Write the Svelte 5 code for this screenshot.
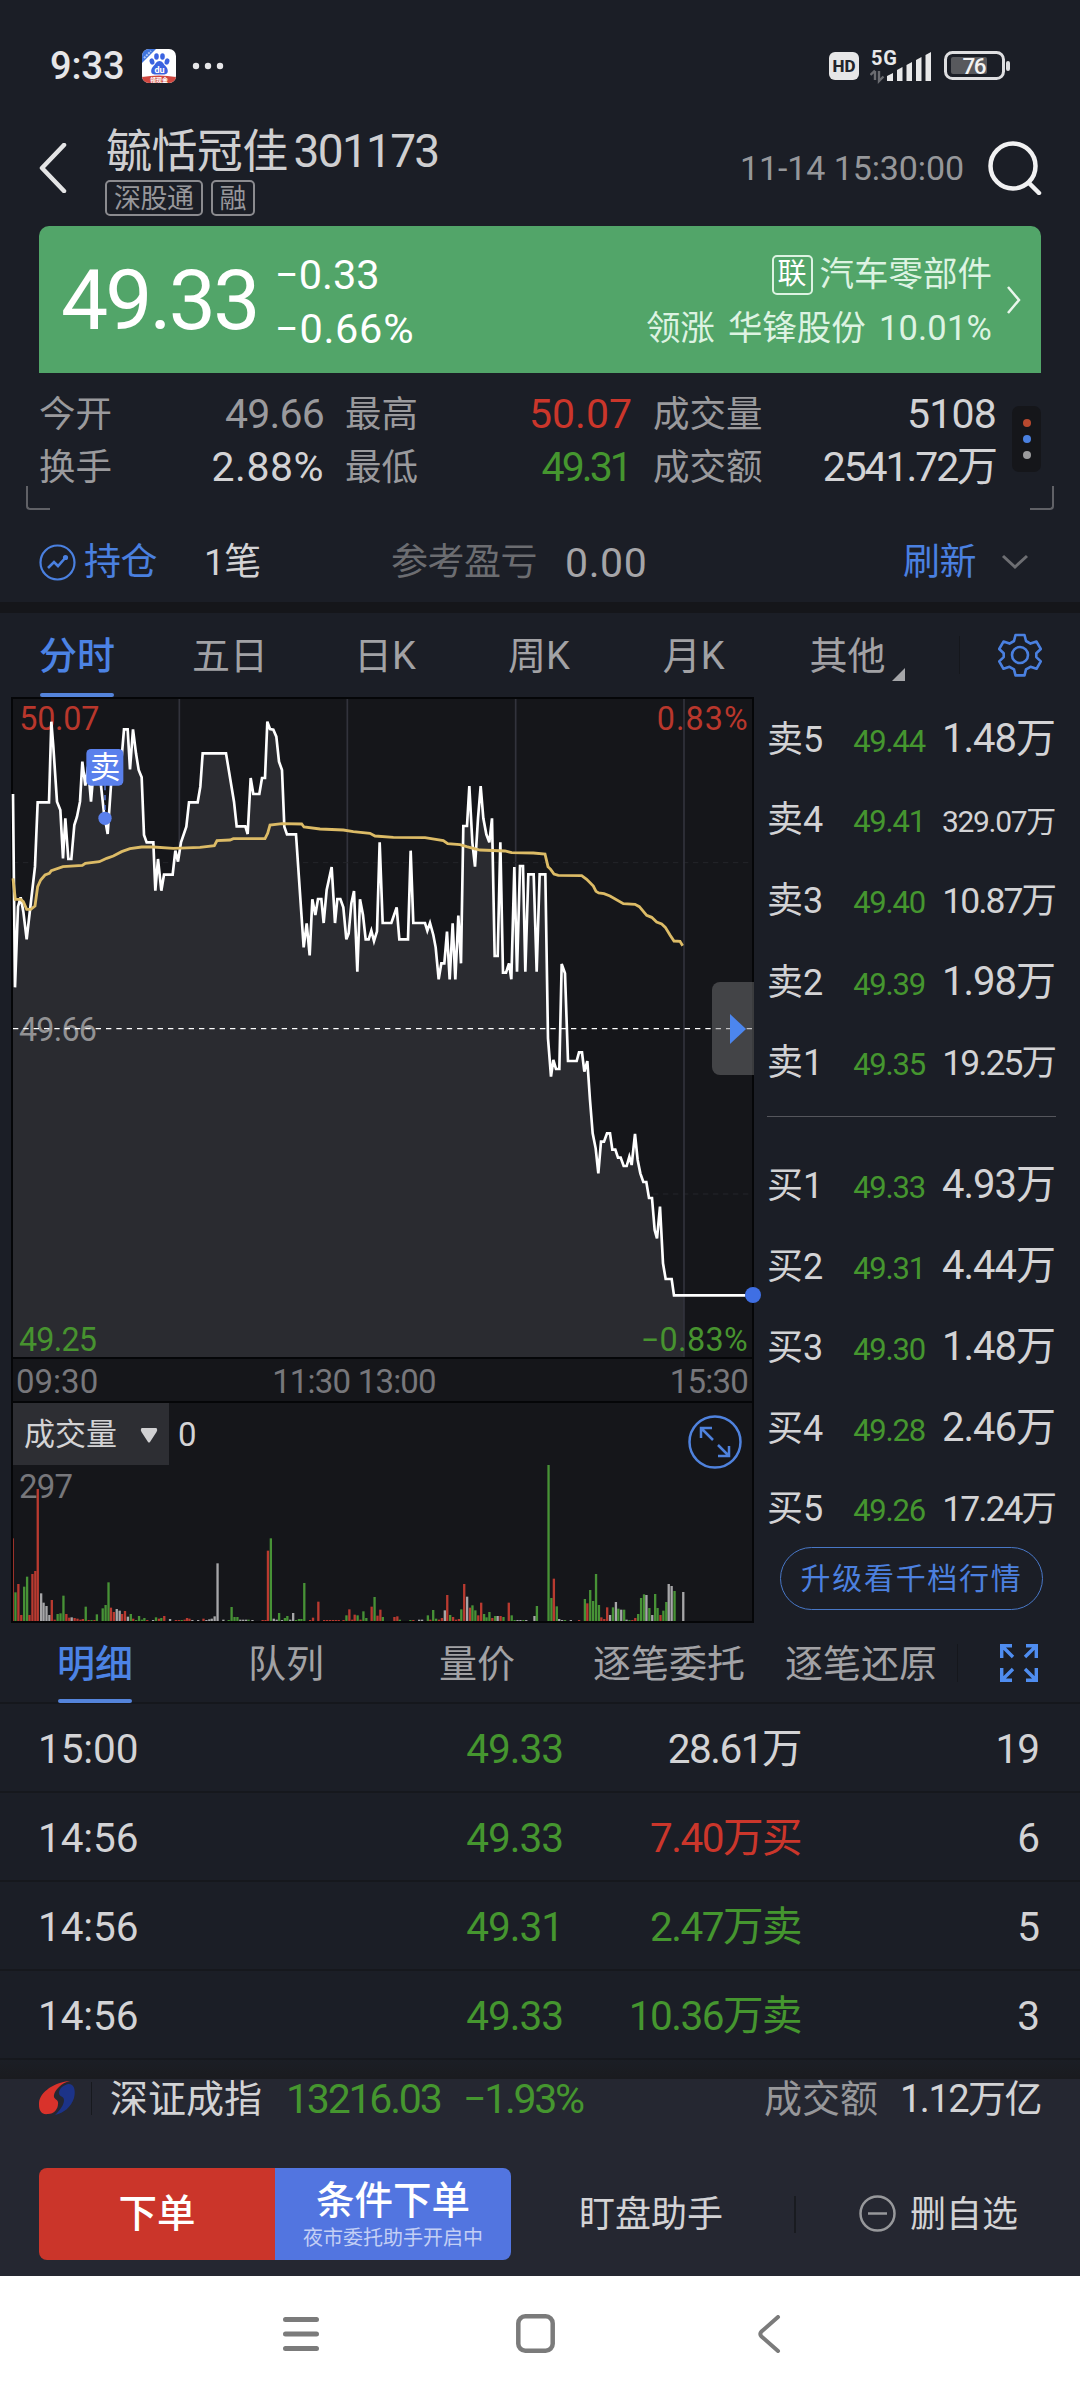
<script>
  // Minute line and average line, in plot units (three per pixel).
  const price =
    '39,312 45,892 54,650 62,622 70,665 80,748 90,660 105,530 113,337 147,337 154,95 160,170 171,335 181,360 189,505 196,385 205,507 214,507 223,405 231,380 240,335 247,215 256,287 264,230 273,335 281,240 298,240 312,370 323,432 333,285 345,230 357,280 366,190 372,118 383,118 390,238 399,118 408,190 416,240 425,262 432,435 440,457 460,457 466,602 474,507 484,602 492,554 518,554 526,482 534,515 543,457 559,410 567,337 593,337 601,290 608,190 678,190 702,335 710,409 736,409 743,432 752,264 760,312 778,312 786,264 795,264 802,95 810,117 820,119 829,140 837,215 846,240 853,410 861,433 888,433 911,772 920,700 929,796 937,628 946,675 954,627 964,627 971,699 980,600 995,531 1005,699 1012,627 1021,627 1030,652 1039,748 1046,730 1054,640 1062,603 1072,845 1080,628 1089,675 1097,748 1106,748 1114,722 1122,753 1131,724 1139,457 1148,699 1174,699 1190,652 1198,748 1224,748 1232,482 1240,699 1275,699 1282,722 1290,699 1300,735 1307,772 1316,868 1324,820 1333,820 1341,725 1349,868 1358,700 1366,868 1375,677 1383,820 1390,408 1401,408 1408,288 1417,457 1425,530 1434,385 1442,288 1450,385 1459,433 1468,457 1476,385 1484,798 1493,798 1501,457 1509,848 1518,848 1527,820 1534,868 1543,531 1551,845 1560,528 1569,528 1576,845 1585,553 1601,553 1610,845 1619,553 1636,553 1644,1045 1653,1160 1660,1110 1668,1137 1678,1137 1685,822 1695,850 1704,1113 1730,1113 1737,1087 1746,1087 1753,1145 1762,1113 1770,1230 1778,1330 1787,1375 1795,1450 1803,1355 1812,1355 1821,1330 1830,1330 1837,1379 1846,1379 1854,1403 1862,1403 1871,1428 1880,1428 1888,1400 1895,1425 1905,1332 1913,1410 1921,1450 1930,1476 1939,1476 1947,1524 1956,1524 1964,1620 1971,1645 1980,1550 1989,1720 1997,1767 2015,1767 2022,1816';
  const average =
    '39,565 46,628 62,628 70,635 80,658 92,658 105,648 113,590 122,570 135,555 148,550 154,542 189,530 247,526 256,520 298,515 320,505 340,498 365,485 390,476 425,471 460,471 520,475 600,472 643,467 651,452 690,450 700,446 795,446 803,430 810,405 846,401 905,402 912,411 960,417 1030,420 1060,425 1110,430 1125,438 1180,442 1275,443 1330,452 1343,461 1380,464 1400,470 1440,480 1515,483 1535,488 1600,489 1635,492 1644,530 1652,538 1662,552 1675,556 1745,557 1760,568 1780,588 1788,604 1796,609 1812,611 1830,618 1870,641 1905,643 1918,650 1940,676 1955,682 1970,696 1985,702 1996,712 2010,735 2022,753 2040,754 2048,767';

  // Volume bars: x, top, colour key.
  const volume = '28,595,r 31,757,g 37,732,r 43,825,r 49,740,g 55,710,g 60,825,r 66,702,r 72,693,r 77,447,r 84,760,w 89,788,w 95,798,w 101,825,w 106,780,r 112,839,r 118,822,g 124,820,g 130,767,g 136,822,r 142,833,r 147,832,w 153,834,r 159,836,r 165,839,r 170,837,r 176,800,g 182,840,r 188,840,g 194,840,r 199,823,g 211,805,g 217,795,g 223,727,g 228,803,r 234,816,r 240,807,w 246,812,w 251,822,r 257,813,r 263,830,w 269,822,g 274,836,r 280,840,g 286,828,g 292,839,g 297,834,g 303,840,r 315,840,w 321,832,g 327,836,r 332,834,g 338,828,r 350,837,w 362,840,r 368,840,r 374,840,g 380,839,r 385,834,r 390,836,r 396,840,w 408,840,w 419,836,r 425,840,w 431,838,w 436,836,w 442,829,w 448,670,w 460,839,w 471,840,g 477,801,g 483,831,g 489,831,g 495,839,w 501,839,w 507,839,w 512,839,g 520,840,w 541,840,r 547,840,r 552,632,r 558,595,g 564,836,w 570,839,w 575,819,g 581,840,w 587,834,g 592,828,g 598,839,w 604,819,w 610,840,g 616,837,g 621,837,g 627,729,g 639,840,r 645,833,r 656,785,r 668,840,r 674,840,r 680,840,r 686,840,r 692,840,r 698,840,r 708,840,r 714,826,g 720,808,r 726,839,r 731,824,r 737,826,g 743,839,r 749,814,g 755,834,g 766,800,r 772,771,g 778,827,r 784,809,r 789,831,g 813,831,r 819,829,r 824,839,g 846,840,g 852,840,r 864,839,w 870,839,w 882,826,g 887,839,r 893,810,g 899,836,g 905,839,r 911,834,r 917,811,w 922,765,r 928,825,g 934,831,r 940,839,r 946,837,r 951,808,g 957,732,r 963,770,w 969,803,r 974,796,g 980,811,g 986,826,r 992,788,r 998,822,g 1003,832,g 1009,816,g 1015,834,r 1021,828,g 1026,828,w 1032,828,r 1038,831,g 1049,788,r 1055,826,g 1061,840,g 1067,840,w 1073,840,w 1079,840,g 1085,840,w 1102,828,w 1107,798,g 1131,375,g 1137,774,g 1142,716,r 1148,799,g 1153,837,w 1159,840,w 1165,840,g 1177,840,w 1194,840,r 1206,777,g 1211,790,r 1217,750,g 1223,783,g 1229,702,g 1235,795,g 1240,832,r 1246,837,r 1252,802,r 1258,825,w 1264,802,g 1270,786,w 1275,806,g 1281,809,w 1287,809,g 1292,839,w 1298,840,g 1304,840,r 1310,834,r 1316,822,g 1322,774,g 1328,763,g 1333,765,w 1339,804,g 1345,825,w 1351,762,g 1356,804,g 1362,825,r 1368,812,g 1374,786,g 1379,732,w 1385,738,w 1391,753,g 1409,756,w'
    .split(' ')
    .map((b) => b.split(','));

  const sells = [
    ['卖5', '49.44', '1.48万', 'l'],
    ['卖4', '49.41', '329.07万', 's'],
    ['卖3', '49.40', '10.87万', 'm'],
    ['卖2', '49.39', '1.98万', 'l'],
    ['卖1', '49.35', '19.25万', 'm'],
  ];
  const buys = [
    ['买1', '49.33', '4.93万', 'l'],
    ['买2', '49.31', '4.44万', 'l'],
    ['买3', '49.30', '1.48万', 'l'],
    ['买4', '49.28', '2.46万', 'l'],
    ['买5', '49.26', '17.24万', 'm'],
  ];
  const trades = [
    ['15:00', '49.33', '28.61万', '', '19'],
    ['14:56', '49.33', '7.40万买', 'red', '6'],
    ['14:56', '49.31', '2.47万卖', 'green', '5'],
    ['14:56', '49.33', '10.36万卖', 'green', '3'],
  ];
</script>

{#snippet level(row)}
  <div class="level">
    <span class="lv">{row[0]}</span>
    <span class="lp green">{row[1]}</span>
    <span class="lq {row[3]}">{row[2]}</span>
  </div>
{/snippet}

<main>
  <header class="status">
    <span class="clock">9:33</span>
    <svg class="app-icon" width="34" height="34" viewBox="0 0 34 34">
      <clipPath id="ic"><rect width="34" height="34" rx="7" /></clipPath>
      <g clip-path="url(#ic)">
        <rect width="34" height="34" fill="#fff" />
        <path d="M0 0h14L0 14z" fill="#3f74dc" />
        <path d="M2 9 9 2" stroke="#a9c4f7" stroke-width="2" stroke-dasharray="2 1" />
        <g fill="#3b63e0">
          <ellipse cx="10" cy="12.5" rx="2.4" ry="3.2" transform="rotate(-15 10 12.5)" />
          <ellipse cx="14.5" cy="7.5" rx="2.3" ry="3.3" />
          <ellipse cx="20.5" cy="7.5" rx="2.3" ry="3.3" />
          <ellipse cx="25" cy="12.5" rx="2.4" ry="3.2" transform="rotate(15 25 12.5)" />
          <path d="M17.5 12c3 0 4 3 6 5 3 3 3.500 8-1 8.500h-10c-4.500-.5-4-5.500-1-8.500 2-2 3-5 6-5z" />
        </g>
        <text x="17.500" y="23.500" text-anchor="middle" font-size="9" font-weight="700" fill="#fff">du</text>
        <path d="M0 28q17-3 34 0v6H0z" fill="#d0473f" />
        <text x="17" y="33" text-anchor="middle" font-size="6" font-weight="700" fill="#fff">领现金</text>
      </g>
    </svg>
    <svg class="more" width="32" height="8" viewBox="0 0 32 8" fill="#e6e6e8"><circle cx="4" cy="4" r="3.200" /><circle cx="16" cy="4" r="3.200" /><circle cx="28" cy="4" r="3.200" /></svg>
    <span class="hd">HD</span>
    <div class="net">
      <svg width="62" height="40" viewBox="0 -4 62 40" fill="#e8e8e9">
        <text x="1" y="14.500" font-size="20" font-weight="700" textLength="26">5G</text>
        <path d="M5 20v9M0.500 24l4.500-4.500M9 20v10l4.500-4.500" transform="translate(0 1)" stroke="#6a6b70" stroke-width="2.400" fill="none" />
        <path d="M17 31v-5l6-3v8zM27 31V20l5.500-3v14zM36.500 31V15l5.500-3v19zM46 31V10l5.500-3v24zM55.500 31V5l5.500-3v29z" />
      </svg>
    </div>
    <svg class="battery" width="68" height="30" viewBox="0 0 68 30">
      <rect x="1.500" y="1.500" width="58" height="26" rx="7" fill="none" stroke="#dedee0" stroke-width="3" />
      <rect x="7" y="6" width="36" height="17" rx="2" fill="#58595d" />
      <path d="M64 12v6" stroke="#dedee0" stroke-width="4" stroke-linecap="round" />
      <text x="30.500" y="22.500" text-anchor="middle" font-size="22.500" font-weight="500" fill="#f2f2f2" textLength="24">76</text>
    </svg>
  </header>

  <section class="title">
    <svg class="back" width="28" height="50" viewBox="0 0 28 50"><path d="M25 2 3 25l22 23" fill="none" stroke="#e4e4e5" stroke-width="4.500" stroke-linejoin="round" stroke-linecap="round" /></svg>
    <div class="names">
      <div class="name">毓恬冠佳<span>301173</span></div>
      <div class="tags"><span>深股通</span><span>融</span></div>
    </div>
    <time>11-14 15:30:00</time>
    <svg class="search" width="54" height="54" viewBox="0 0 54 54" fill="none" stroke="#f1f1f2" stroke-width="4.500" stroke-linecap="round"><circle cx="25" cy="25" r="22.500" /><path d="m41 42 10 10" /></svg>
  </section>

  <section class="quote">
    <div class="last">49.33</div>
    <div class="chg"><span>−0.33</span><span>−0.66%</span></div>
    <div class="sector">
      <div><i>联</i>汽车零部件</div>
      <div class="lead"><span>领涨</span><span>华锋股份</span><b>10.01%</b></div>
    </div>
    <svg width="16" height="30" viewBox="0 0 16 30"><path d="m2 2 11 13L2 28" fill="none" stroke="#e9f6ec" stroke-width="2.500" /></svg>
  </section>

  <section class="stats">
    <div class="grid">
      <span>今开</span><b class="dim">49.66</b><span>最高</span><b class="red">50.07</b><span>成交量</span><b>5108</b>
      <span>换手</span><b class="wide">2.88%</b><span>最低</span><b class="green tight">49.31</b><span>成交额</span><b class="tight">2541.72万</b>
    </div>
    <div class="dots"><i></i><i></i><i></i></div>
  </section>
  <div class="corners"><i></i><i></i></div>

  <section class="hold">
    <svg width="37" height="37" viewBox="0 0 37 37" fill="none" stroke="#4a80e0" stroke-width="2.200"><circle cx="18.500" cy="18.500" r="17" /><path d="m9 24 6-6 4 4 8-9" stroke-width="2.600" /><circle cx="26.500" cy="13.500" r="1.500" fill="#4a80e0" /></svg>
    <span class="pos">持仓</span><span class="cnt">1笔</span><span class="ref">参考盈亏</span><span class="pl">0.00</span><span class="fresh">刷新</span>
    <svg class="down" width="28" height="16" viewBox="0 0 28 16"><path d="m2 2 12 11L26 2" fill="none" stroke="#6d6e72" stroke-width="3" /></svg>
  </section>
  <div class="band"></div>

  <nav class="tabs">
    <span class="on">分时</span><span>五日</span><span>日K</span><span>周K</span><span>月K</span><span class="other">其他</span>
    <svg class="tri" width="13" height="13"><path d="M13 0v13H0z" fill="#a5a6a9" /></svg>
    <i></i>
    <svg class="gear" width="44" height="44" viewBox="0 0 44 44" fill="none" stroke="#4a80e0" stroke-width="2.600" stroke-linejoin="round">
      <path d="M17.500 2h9l1.500 6 4.500 2.600 6-2 4.300 7.400-4.500 4.300v3.800l4.500 4.300-4.300 7.400-6-2-4.500 2.600-1.500 6h-9l-1.500-6-4.500-2.600-6 2L1.200 28.400l4.500-4.300v-3.800L1.200 16l4.300-7.400 6 2L16 8z" /><circle cx="22" cy="22" r="8" />
    </svg>
  </nav>

  <section class="market">
    <div class="charts">
      <div class="plot">
        <svg class="lines" width="740" height="658" viewBox="39 27 2220 1974">
          <g stroke="#32333c" stroke-width="5"><path d="M538 27v1974M1042 27v1974M1547 27v1974" /></g>
          <path d="M39 518h2220M39 1512h2220" stroke="#24252a" stroke-width="3" stroke-dasharray="16 14" />
          <polygon points="39,2001 {price} 2052,1816 2052,2001" fill="#2a2b30" />
          <path d="M2052 27v1974" stroke="#32333c" stroke-width="5" />
          <g font-size="97">
            <text x="58" y="121" fill="#b9372c" textLength="240">50.07</text>
            <text x="1970" y="121" fill="#b9372c" textLength="273">0.83%</text>
            <text x="57" y="1052" fill="#929294" textLength="234">49.66</text>
            <text x="57" y="1982" fill="#47932f" textLength="234">49.25</text>
            <text x="1922" y="1982" fill="#47932f" textLength="321">−0.83%</text>
          </g>
          <path d="M39 1016h2220" stroke="#fff" stroke-width="4" stroke-dasharray="16 15" />
          <polyline points="{price} 2236,1816" fill="none" stroke="#fff" stroke-width="8" />
          <polyline points={average} fill="none" stroke="#dcbb66" stroke-width="8.500" />
          <path d="M315 285v75" stroke="#5c80ee" stroke-width="4" stroke-dasharray="16 14" />
          <circle cx="315" cy="385" r="20" fill="#5a80ec" />
          <rect x="259" y="177" width="111" height="110" rx="14" fill="#5a80ec" />
          <text x="315" y="265" font-size="92" text-anchor="middle" fill="#fff">卖</text>
        </svg>
        <div class="handle"><svg width="16" height="30"><path d="m0 0 16 15L0 30z" fill="#4c86ee" /></svg></div>
        <div class="cursor"></div>
      </div>
      <div class="hours"><span>09:30</span><span>11:30 13:00</span><span>15:30</span></div>
      <div class="vol">
        <svg class="bars" width="740" height="217" viewBox="26 192 1527 651" preserveAspectRatio="none">
          {#each volume as [x, y, c]}
            <rect class={c} x={x - 2.3} y={y} width={x === '28' ? 2 : 4.8} height={843 - y} />
          {/each}
        </svg>
        <div class="vhead"><span class="pick">成交量<svg width="18" height="15" viewBox="0 0 18 15"><path d="M1.500 0h15q1.500 2 0 4L10 14q-1 1-2 0L1.500 4Q0 2 1.500 0z" fill="#d0d0d2" /></svg></span><span class="zero">0</span></div>
        <span class="max">297</span>
        <svg class="zoom" width="54" height="54" viewBox="0 0 54 54" fill="none" stroke="#4f82dd" stroke-width="2.500"><circle cx="27" cy="27" r="25.500" /><path d="M13 23V13h11M13 13l12 12M30 30l11 11M30 41h11V31" /></svg>
      </div>
    </div>

    <aside>
      {#each sells as row}{@render level(row)}{/each}
      <hr />
      {#each buys as row}{@render level(row)}{/each}
      <button>升级看千档行情</button>
    </aside>
  </section>

  <nav class="tabs2">
    <span class="on">明细</span><span>队列</span><span>量价</span><span>逐笔委托</span><span>逐笔还原</span><i></i>
    <svg width="38" height="38" viewBox="0 0 38 38" fill="none" stroke="#4f8df0" stroke-width="3.400"><path d="M1.700 14V1.700H12M2 2l11 11M26 1.700h10.300V14M36 2 25 13M1.700 24v12.300H12M2 36l11-11M36.300 24v12.300H26M36 36 25 25" /></svg>
  </nav>

  <section class="trades">
    {#each trades as t}
      <div class="trade"><span>{t[0]}</span><span class="green">{t[1]}</span><span class={t[3]}>{t[2]}</span><span>{t[4]}</span></div>
    {/each}
  </section>
  <div class="shade"></div>

  <section class="index">
    <svg width="36" height="36" viewBox="0 0 36 36"><path d="M31 0C15 1-1 12 0 24c0 6 3 10 9 9 6 0 10-5 10-10 1-5-5-4-4-9S22 2 31 0z" fill="#d9322b" /><path d="M29 3c6-1 8 6 6 14-3 9-10 15-19 17 5-5 9-10 9-15 0-4-5-3-5-7 0-5 5-8 9-9z" fill="#1c3388" /></svg>
    <i></i>
    <span class="iname">深证成指</span><span class="ival green">13216.03</span><span class="ipct green">−1.93%</span><span class="iamt">成交额</span><span class="itot">1.12万亿</span>
  </section>

  <footer>
    <button class="order">下单</button>
    <button class="cond">条件下单<small>夜市委托助手开启中</small></button>
    <span class="watch">盯盘助手</span>
    <i></i>
    <svg width="37" height="37" viewBox="0 0 37 37" fill="none" stroke="#97989b" stroke-width="2.500"><circle cx="18.500" cy="18.500" r="17" /><path d="M9 18.500h19" /></svg>
    <span class="del">删自选</span>
  </footer>

  <div class="sysnav">
    <svg width="36" height="36" viewBox="0 0 36 36" stroke="#7b7b7b" stroke-width="5" stroke-linecap="round"><path d="M2.500 3.500h31M2.500 18h31M2.500 32.500h31" /></svg>
    <svg width="39" height="39" viewBox="0 0 39 39" fill="none" stroke="#7b7b7b" stroke-width="4.500"><rect x="2.300" y="2.300" width="34.400" height="34.400" rx="7" /></svg>
    <svg width="24" height="38" viewBox="0 0 24 38" fill="none" stroke="#7b7b7b" stroke-width="4" stroke-linecap="round"><path d="M21 2 4.500 16.500q-2.500 2.500 0 5L21 36" /></svg>
  </div>
</main>

<style>
  :global(body) { background: #1b1e26; }
  main {
    width: 1080px;
    height: 2400px;
    overflow: hidden;
    display: flex;
    flex-direction: column;
    background: #1b1e26;
    color: #d3d3d5;
    font-family: Roboto, "Noto Sans CJK SC", sans-serif;
    line-height: 1.2;
    white-space: nowrap;
  }
  main * { box-sizing: border-box; flex-shrink: 0; }
  svg { display: block; }
  b, i { font-weight: 400; font-style: normal; }
  button { border: 0; padding: 0; font: inherit; color: inherit; background: none; }
  .green { color: #45962f; }
  .red { color: #cb362b; }

  .status { height: 132px; display: flex; align-items: center; padding-left: 50px; }
  .clock { width: 92px; margin-top: 2px; font-size: 38px; font-weight: 500; color: #e6e6e8; letter-spacing: -0.1px; }
  .more { margin-left: 16px; }
  .hd { margin-left: 605px; width: 30px; height: 28px; border-radius: 6px; background: #e6e6e7; color: #22242b; font-size: 17px; font-weight: 800; text-align: center; line-height: 28px; }
  .net { margin-left: 11px; }
  .battery { margin-left: 12px; }

  .title { height: 94px; display: flex; align-items: flex-start; padding-left: 39px; }
  .back { margin-top: 11px; }
  .names { margin-left: 38px; width: 635px; margin-top: -9px; }
  .name { font-size: 46px; height: 57px; line-height: 56px; letter-spacing: -0.6px; padding-left: 1px; color: #cfcfd1; }
  .name span { letter-spacing: -1.700px; margin-left: 6px; }
  .tags { display: flex; gap: 8px; }
  .tags span { height: 36px; border: 2px solid #8b8b8f; border-radius: 5px; padding: 0 7px; font-size: 27px; line-height: 34px; color: #97979b; letter-spacing: -0.500px; }
  time { width: 224px; margin-top: 16px; font-size: 34px; color: #96979a; letter-spacing: -0.1px; }
  .search { margin-left: 24px; margin-top: 9px; }

  .quote { margin: 0 39px; height: 147px; border-radius: 10px 10px 0 0; background: #52a569; color: #fff; display: flex; align-items: center; padding-left: 22px; }
  .last { width: 214px; font-size: 84px; letter-spacing: -2.900px; margin-top: 4px; }
  .chg { width: 192px; margin-top: 4px; display: flex; flex-direction: column; font-size: 41.500px; gap: 4px; }
  .chg span + span { letter-spacing: 0.700px; }
  .sector { width: 525px; margin-top: 4px; display: flex; flex-direction: column; align-items: flex-end; gap: 12px; font-size: 34.500px; color: #ddf3e2; }
  .sector > div { display: flex; align-items: center; height: 42px; }
  .sector i { width: 41px; height: 40px; margin-right: 7px; border: 2px solid #ddf3e2; border-radius: 5px; font-size: 29px; line-height: 35px; text-align: center; color: #fff; }
  .lead { gap: 13px; }
  .lead b { letter-spacing: 0.2px; }
  .quote > svg { margin-left: 14px; }

  .stats { height: 121px; display: flex; padding: 15px 40px 0 39px; }
  .grid { width: 957px; display: grid; grid-template-columns: 74px 211px 95px 213px 110px 254px; grid-template-rows: 53px 53px; align-items: center; font-size: 36.500px; }
  .grid span { color: #9a9a9d; }
  .grid span:nth-child(6n + 3), .grid span:nth-child(6n + 5) { padding-left: 21px; }
  .grid b { font-size: 41px; text-align: right; letter-spacing: -0.8px; }
  .grid b.red { letter-spacing: 0; }
  .grid b.wide { letter-spacing: 0.5px; }
  .grid b.tight { letter-spacing: -2.100px; }
  .grid b.green { padding-right: 2px; letter-spacing: -2.900px; }
  .grid b.dim { color: #9a9a9d; }
  .dots { margin: 18px 0 0 16px; width: 29px; height: 66px; border-radius: 7px; background: #15161a; display: flex; flex-direction: column; align-items: center; justify-content: center; gap: 8px; }
  .dots i { width: 8px; height: 8px; border-radius: 50%; background: #b8492f; }
  .dots i:nth-child(2) { background: #4a80e0; }
  .dots i:nth-child(3) { background: #9b9b9d; }
  .corners { height: 24px; margin: -8px 26px 0; display: flex; justify-content: space-between; }
  .corners i { width: 24px; border: solid #606166; border-width: 0 0 2px 2px; border-radius: 0 0 0 4px; }
  .corners i + i { border-width: 0 2px 2px 0; border-radius: 0 0 4px 0; }

  .hold { height: 92px; padding-top: 12px; display: flex; align-items: center; padding-left: 39px; font-size: 37px; }
  .hold span { letter-spacing: -0.5px; margin-top: 3px; }
  .pos { margin-left: 8px; width: 120px; color: #4a80e0; }
  .hold .cnt { width: 187px; font-size: 37px; }
  .ref { width: 174px; color: #6c6d71; }
  .hold .pl { width: 338px; font-size: 41px; color: #a5a5a8; letter-spacing: 0.600px; }
  .fresh { color: #4a80e0; }
  .down { margin-left: 25px; }
  .band { height: 11px; background: #15161a; }

  .tabs { height: 84px; display: flex; align-items: center; padding-left: 39px; font-size: 38px; color: #a2a2a5; }
  .tabs span { height: 84px; line-height: 86px; margin-right: 77px; }
  .tabs .on, .tabs2 .on { color: #4c83e4; font-weight: 500; position: relative; }
  .on::after { content: ''; position: absolute; left: 1px; right: 1px; bottom: 0; height: 4px; border-radius: 2px; background: #5484db; }
  .tabs span:nth-child(2) { margin-right: 86px; }
  .tabs span:nth-child(3) { margin-right: 92px; }
  .tabs span:nth-child(4) { margin-right: 93px; }
  .tabs span:nth-child(5) { margin-right: 85px; }
  .tabs .other { margin-right: 6px; }
  .tri { margin-top: 38px; }
  .tabs i, .tabs2 i { width: 1px; height: 38px; margin-left: 54px; background: #15171c; }
  .gear { margin-left: 38px; }

  .market { height: 926px; display: flex; }
  .charts { width: 743px; margin-left: 11px; background: #15161a; border: solid #050608; border-width: 2px 2px 2px 2px; }
  .plot { position: relative; height: 658px; }
  .lines { overflow: visible; }
  .handle { position: absolute; right: -2px; top: 283px; width: 42px; height: 93px; border-radius: 8px 0 0 8px; background: rgba(120, 120, 122, 0.480); display: flex; align-items: center; padding-left: 18px; }
  .cursor { position: absolute; right: -9px; top: 588px; width: 16px; height: 16px; border-radius: 50%; background: #3f6fe4; }
  .hours { height: 46px; border: solid #050608; border-width: 2px 0; display: flex; justify-content: space-between; align-items: center; padding: 4px 4px 0 3px; font-size: 33px; color: #77777b; letter-spacing: 0; }
  .hours span:nth-child(2) { margin-right: 60px; letter-spacing: -0.8px; }
  .hours span:nth-child(3) { letter-spacing: -0.8px; }
  .vol { position: relative; height: 218px; }
  .bars { position: absolute; left: 0; bottom: 0; }
  .r { fill: #b93a30; }
  .g { fill: #479236; }
  .w { fill: #a6a6a8; }
  .vhead { display: flex; align-items: center; height: 62px; }
  .pick { width: 156px; height: 62px; padding: 2px 0 0 11px; background: #2d2e33; font-size: 31px; display: flex; align-items: center; gap: 23px; }
  .zero { margin: 2px 0 0 9px; font-size: 33px; }
  .max { position: absolute; left: 6px; top: 64px; font-size: 33px; color: #77777b; letter-spacing: -0.8px; }
  .zoom { position: absolute; right: 10px; top: 12px; }

  aside { width: 326px; padding: 1px 24px 0 13px; }
  .level { height: 81px; padding-top: 19px; display: flex; align-items: baseline; }
  .level span { line-height: 44px; }
  .lv { width: 81px; font-size: 36px; }
  .lp { width: 77px; font-size: 31px; text-align: right; letter-spacing: -1.200px; }
  .lq { width: 130px; text-align: right; }
  .lq.l { font-size: 40px; letter-spacing: -1px; }
  .lq.m { font-size: 35.500px; letter-spacing: -2px; }
  .lq.s { font-size: 30px; letter-spacing: -1.300px; }
  hr { border: 0; height: 1px; background: #55565c; margin: 13px 0 27px 0; }
  aside button { display: block; margin: -2px 0 0 13px; width: 263px; height: 63px; border: 1.500px solid #4877c6; border-radius: 32px; color: #4c80df; font-size: 30px; letter-spacing: 1.700px; line-height: 59px; }

  .tabs2 { height: 81px; border-bottom: 2px solid #15171c; display: flex; align-items: center; padding-left: 57px; font-size: 38px; color: #a2a2a5; }
  .tabs2 span { height: 80px; line-height: 82px; margin-right: 115px; }
  .tabs2 span:nth-child(3) { margin-right: 78px; }
  .tabs2 span:nth-child(4) { margin-right: 40px; }
  .tabs2 span:nth-child(5) { margin-right: 20px; }
  .tabs2 i { margin-left: 0; }
  .tabs2 svg { margin-left: 42px; }

  .trade { height: 89px; border-bottom: 2px solid #16181d; display: grid; grid-template-columns: 200px 325px 238px 238px; align-items: center; padding: 4px 0 0 38px; font-size: 40.500px; letter-spacing: -1px; }
  .trade span:first-child { letter-spacing: -0.100px; }
  .trade span:not(:first-child) { text-align: right; }
  .trade span:nth-child(3) { letter-spacing: -1.500px; }
  .shade { height: 19px; background: linear-gradient(#1b1e25, #1a1b1f); }

  .index { height: 89px; background: #252731; display: flex; align-items: flex-start; padding-left: 39px; font-size: 38px; line-height: 40px; }
  .index > svg { margin-top: 2px; }
  .index i { width: 1px; height: 33px; margin: 3px 18px 0 16px; background: #17191e; }
  .iname { width: 176px; }
  .ival { width: 177px; font-size: 41px; letter-spacing: -2.200px; }
  .ipct { width: 301px; font-size: 41px; letter-spacing: -2.300px; }
  .iamt { width: 136px; color: #97979a; }
  .itot { letter-spacing: -1.500px; }

  footer { height: 108px; background: #252731; display: flex; align-items: flex-start; padding-left: 39px; font-size: 36px; }
  footer button { width: 236px; height: 92px; color: #fff; font-weight: 500; font-size: 38.500px; }
  .order { background: #cb352a; border-radius: 8px 0 0 8px; }
  .cond { background: #5275e0; border-radius: 0 8px 8px 0; line-height: 46px; }
  .cond small { display: block; font-size: 20px; line-height: 28px; margin-bottom: -2px; font-weight: 400; color: #c3cff5; }
  .watch { margin: 26px 0 0 68px; }
  footer i { width: 2px; height: 37px; margin: 28px 63px 0 71px; background: #191b20; }
  footer svg { margin-top: 27px; }
  .del { margin: 26px 0 0 14px; }

  .sysnav { height: 125px; background: #fff; display: flex; align-items: center; padding: 0 0 10px 283px; }
  .sysnav svg:nth-child(2) { margin-left: 197px; }
  .sysnav svg:nth-child(3) { margin-left: 202px; }
</style>
